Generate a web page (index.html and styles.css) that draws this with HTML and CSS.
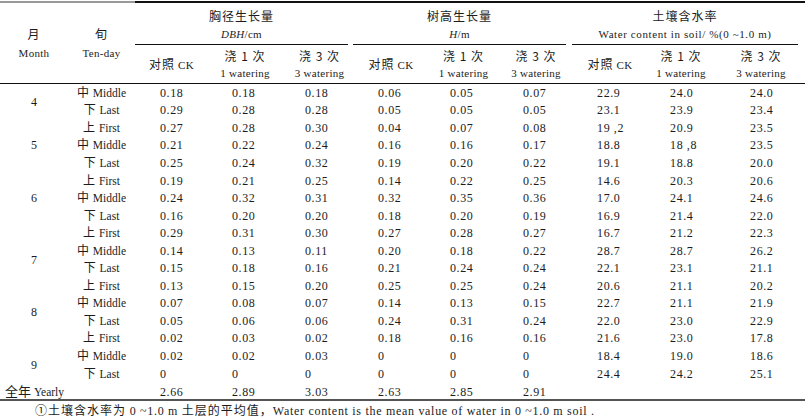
FILE: index.html
```html
<!DOCTYPE html>
<html lang="zh">
<head>
<meta charset="utf-8">
<title>Growth table</title>
<link rel="stylesheet" href="styles.css">
</head>
<body>
<table class="tbl">
  <colgroup>
    <col class="w68"><col class="w67"><col class="w73"><col class="w74"><col class="w70"><col class="w78"><col class="w67"><col class="w73"><col class="w80"><col class="w62"><col class="w93">
  </colgroup>
  <thead>
    <tr class="hr1">
      <th rowspan="2" class="lead"><span class="zh">月</span><br><span class="en">Month</span></th>
      <th rowspan="2" class="lead"><span class="zh">旬</span><br><span class="en">Ten-day</span></th>
      <th colspan="3" class="grp"><div class="gline g1"><span class="zh">胸径生长量</span><br><span class="en"><i>DBH</i>/cm</span></div></th>
      <th colspan="3" class="grp"><div class="gline g2"><span class="zh">树高生长量</span><br><span class="en"><i>H</i>/m</span></div></th>
      <th colspan="3" class="grp"><div class="gline g3"><span class="zh">土壤含水率</span><br><span class="en wide">Water content in soil/ %(0 ~1.0 m)</span></div></th>
    </tr>
    <tr class="hr2">
      <th class="sub"><span class="zh">对照</span> <span class="en">CK</span></th>
      <th class="sub"><span class="zh">浇 1 次</span><br><span class="en">1 watering</span></th>
      <th class="sub shift"><span class="zh">浇 3 次</span><br><span class="en">3 watering</span></th>
      <th class="sub"><span class="zh">对照</span> <span class="en">CK</span></th>
      <th class="sub"><span class="zh">浇 1 次</span><br><span class="en">1 watering</span></th>
      <th class="sub shift"><span class="zh">浇 3 次</span><br><span class="en">3 watering</span></th>
      <th class="sub"><span class="zh">对照</span> <span class="en">CK</span></th>
      <th class="sub"><span class="zh">浇 1 次</span><br><span class="en">1 watering</span></th>
      <th class="sub shift"><span class="zh">浇 3 次</span><br><span class="en">3 watering</span></th>
    </tr>
  </thead>
  <tbody>
    <tr><td rowspan="2" class="mon">4</td><td class="td"><span class="zh">中</span> Middle</td><td>0.18</td><td>0.18</td><td>0.18</td><td>0.06</td><td>0.05</td><td>0.07</td><td>22.9</td><td>24.0</td><td>24.0</td></tr>
    <tr><td class="td"><span class="zh">下</span> Last</td><td>0.29</td><td>0.28</td><td>0.28</td><td>0.05</td><td>0.05</td><td>0.05</td><td>23.1</td><td>23.9</td><td>23.4</td></tr>
    <tr><td rowspan="3" class="mon">5</td><td class="td"><span class="zh">上</span> First</td><td>0.27</td><td>0.28</td><td>0.30</td><td>0.04</td><td>0.07</td><td>0.08</td><td>19 ,2</td><td>20.9</td><td>23.5</td></tr>
    <tr><td class="td"><span class="zh">中</span> Middle</td><td>0.21</td><td>0.22</td><td>0.24</td><td>0.16</td><td>0.16</td><td>0.17</td><td>18.8</td><td>18 ,8</td><td>23.5</td></tr>
    <tr><td class="td"><span class="zh">下</span> Last</td><td>0.25</td><td>0.24</td><td>0.32</td><td>0.19</td><td>0.20</td><td>0.22</td><td>19.1</td><td>18.8</td><td>20.0</td></tr>
    <tr><td rowspan="3" class="mon">6</td><td class="td"><span class="zh">上</span> First</td><td>0.19</td><td>0.21</td><td>0.25</td><td>0.14</td><td>0.22</td><td>0.25</td><td>14.6</td><td>20.3</td><td>20.6</td></tr>
    <tr><td class="td"><span class="zh">中</span> Middle</td><td>0.24</td><td>0.32</td><td>0.31</td><td>0.32</td><td>0.35</td><td>0.36</td><td>17.0</td><td>24.1</td><td>24.6</td></tr>
    <tr><td class="td"><span class="zh">下</span> Last</td><td>0.16</td><td>0.20</td><td>0.20</td><td>0.18</td><td>0.20</td><td>0.19</td><td>16.9</td><td>21.4</td><td>22.0</td></tr>
    <tr><td rowspan="3" class="mon low">7</td><td class="td"><span class="zh">上</span> First</td><td>0.29</td><td>0.31</td><td>0.30</td><td>0.27</td><td>0.28</td><td>0.27</td><td>16.7</td><td>21.2</td><td>22.3</td></tr>
    <tr><td class="td"><span class="zh">中</span> Middle</td><td>0.14</td><td>0.13</td><td>0.11</td><td>0.20</td><td>0.18</td><td>0.22</td><td>28.7</td><td>28.7</td><td>26.2</td></tr>
    <tr><td class="td"><span class="zh">下</span> Last</td><td>0.15</td><td>0.18</td><td>0.16</td><td>0.21</td><td>0.24</td><td>0.24</td><td>22.1</td><td>23.1</td><td>21.1</td></tr>
    <tr><td rowspan="3" class="mon low">8</td><td class="td"><span class="zh">上</span> First</td><td>0.13</td><td>0.15</td><td>0.20</td><td>0.25</td><td>0.25</td><td>0.24</td><td>20.6</td><td>21.1</td><td>20.2</td></tr>
    <tr><td class="td"><span class="zh">中</span> Middle</td><td>0.07</td><td>0.08</td><td>0.07</td><td>0.14</td><td>0.13</td><td>0.15</td><td>22.7</td><td>21.1</td><td>21.9</td></tr>
    <tr><td class="td"><span class="zh">下</span> Last</td><td>0.05</td><td>0.06</td><td>0.06</td><td>0.24</td><td>0.31</td><td>0.24</td><td>22.0</td><td>23.0</td><td>22.9</td></tr>
    <tr><td rowspan="3" class="mon low">9</td><td class="td"><span class="zh">上</span> First</td><td>0.02</td><td>0.03</td><td>0.02</td><td>0.18</td><td>0.16</td><td>0.16</td><td>21.6</td><td>23.0</td><td>17.8</td></tr>
    <tr><td class="td"><span class="zh">中</span> Middle</td><td>0.02</td><td>0.02</td><td>0.03</td><td>0</td><td>0</td><td>0</td><td>18.4</td><td>19.0</td><td>18.6</td></tr>
    <tr><td class="td"><span class="zh">下</span> Last</td><td>0</td><td>0</td><td>0</td><td>0</td><td>0</td><td>0</td><td>24.4</td><td>24.2</td><td>25.1</td></tr>
    <tr class="yr"><td colspan="2" class="yl"><span class="zh">全年</span> Yearly</td><td>2.66</td><td>2.89</td><td>3.03</td><td>2.63</td><td>2.85</td><td>2.91</td><td></td><td></td><td></td></tr>
  </tbody>
</table>
<p class="note"><span class="zh">①土壤含水率为</span> 0 ~1.0 m <span class="zh">土层的平均值，</span>Water content is the mean value of water in 0 ~1.0 m soil .</p>
</body>
</html>
```
FILE: styles.css
```css
* { box-sizing: border-box; }
html, body { margin: 0; padding: 0; background: #fff; }
body {
  width: 810px;
  height: 419px;
  overflow: hidden;
  font-family: "Liberation Serif", "Noto Sans CJK SC", serif;
  color: #1c1c1c;
  font-size: 12px;
}
.zh { font-family: "Noto Sans CJK SC", sans-serif; font-size: 12px; letter-spacing: 1px; }
.en { font-size: 11px; letter-spacing: 0.3px; }
.en.wide { letter-spacing: 0.6px; }

.tbl {
  width: 805px;
  table-layout: fixed;
  border-collapse: separate;
  border-spacing: 0;
  margin-top: 1px;
}
.w68 { width: 68px; } .w67 { width: 67px; } .w73 { width: 73px; } .w74 { width: 74px; }
.w70 { width: 70px; } .w78 { width: 78px; } .w80 { width: 80px; } .w62 { width: 62px; } .w93 { width: 93px; }

th { font-weight: normal; padding: 0; }

.lead {
  border-top: 2px solid #999;
  border-bottom: 1px solid #111;
  line-height: 18px;
  vertical-align: middle;
  text-align: center;
}
.grp {
  border-top: 2px solid #111;
  vertical-align: bottom;
  text-align: center;
}
.gline {
  padding: 4px 0 1px;
  line-height: 17px;
  border-bottom: 1px solid #111;
}
.g1 { margin: 0 4px 0 0; }
.g2 { margin: 0 4px 0 1px; }
.g3 { margin: 0 7px 0 2px; }

.hr2 { height: 39px; }
.sub {
  border-bottom: 1px solid #111;
  line-height: 16px;
  text-align: center;
  vertical-align: middle;
}
.sub.shift { padding-left: 5px; }

tbody tr { height: 17.55px; }
td {
  padding: 0;
  height: 17.55px;
  line-height: 14px;
  text-align: left;
  letter-spacing: 0.6px;
  white-space: nowrap;
  vertical-align: middle;
}
td .zh { line-height: 10px; }
.mon { text-align: center; letter-spacing: 0; }
.mon.low { padding-top: 18px; }
.td { text-align: center; letter-spacing: 0; font-size: 11.5px; }
.td .zh { letter-spacing: 0; margin-right: 1px; }

td:nth-last-child(9) { padding-left: 25px; }
td:nth-last-child(8) { padding-left: 24px; }
td:nth-last-child(7) { padding-left: 23px; }
td:nth-last-child(6) { padding-left: 26px; }
td:nth-last-child(5) { padding-left: 20px; }
td:nth-last-child(4) { padding-left: 26px; }
td:nth-last-child(3) { padding-left: 27px; }
td:nth-last-child(2) { padding-left: 20px; }
td:nth-last-child(1) { padding-left: 38px; }

.yr td { border-bottom: 2px solid #555; height: 19px; padding-top: 2px; }
.yr .yl { padding-left: 5px; letter-spacing: 0; font-size: 11.5px; }
.yr .yl .zh { letter-spacing: 0; font-size: 13px; }

.note {
  margin: 0;
  padding-left: 35px;
  line-height: 18px;
  font-size: 12px;
  letter-spacing: 0.7px;
}
.note .zh { letter-spacing: 1px; }
```
